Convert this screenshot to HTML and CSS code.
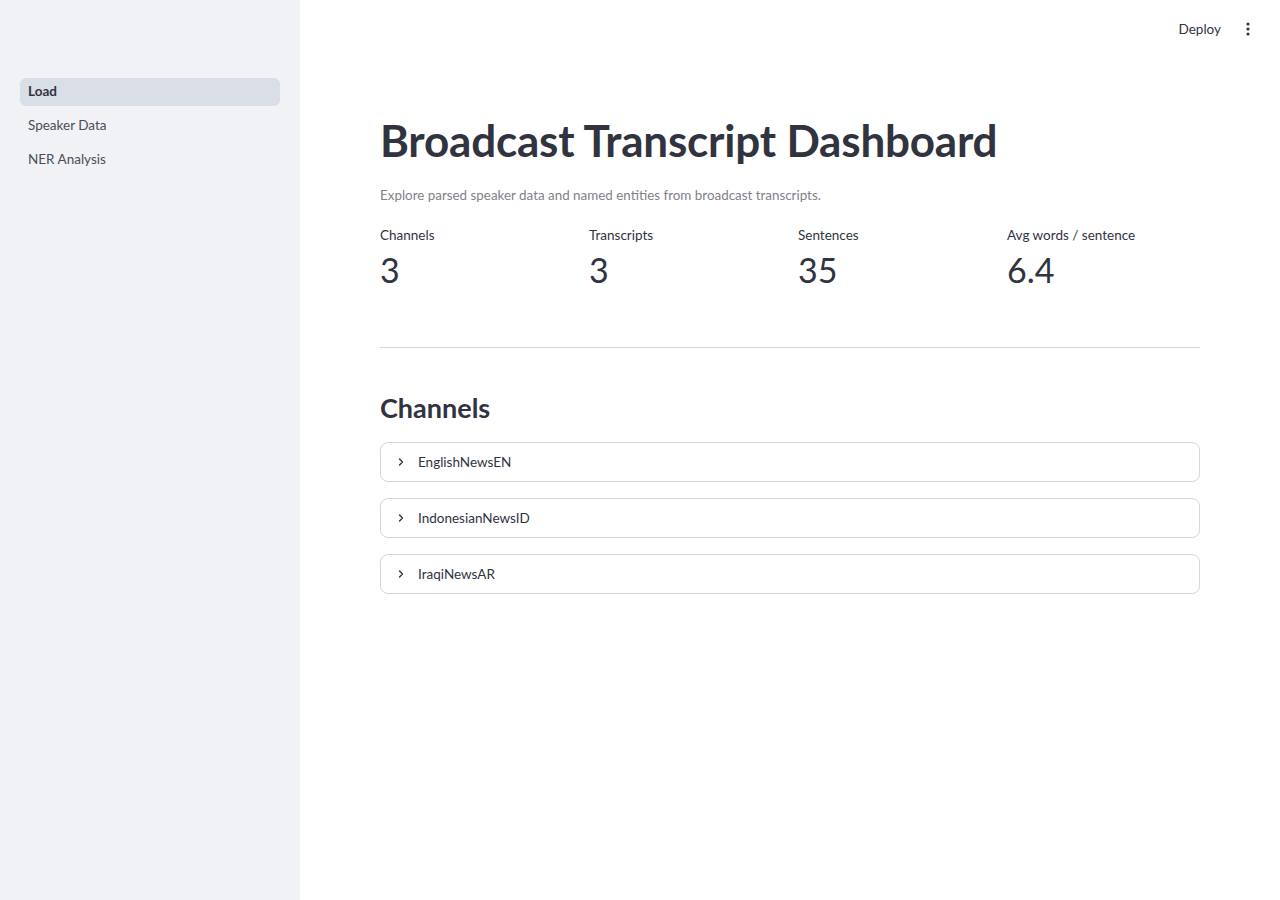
FILE: index.html
```html
<!DOCTYPE html>
<html lang="en">
<head>
    <meta charset="UTF-8">
    <meta name="viewport" content="width=device-width, initial-scale=1.0">
    <title>Broadcast Transcript Dashboard</title>
    <link rel="stylesheet" href="styles.css">
</head>
<body>
    <aside class="sidebar">
        <nav class="nav">
            <a class="nav-item active" href="#">Load</a>
            <a class="nav-item" href="#">Speaker Data</a>
            <a class="nav-item" href="#">NER Analysis</a>
        </nav>
    </aside>

    <div class="main">
        <header class="topbar">
            <span class="deploy">Deploy</span>
            <span class="menu">
                <svg width="16" height="16" viewBox="0 0 16 16">
                    <circle cx="8" cy="3" r="1.6" fill="#31333f"/>
                    <circle cx="8" cy="8" r="1.6" fill="#31333f"/>
                    <circle cx="8" cy="13" r="1.6" fill="#31333f"/>
                </svg>
            </span>
        </header>

        <section class="content">
            <h1 class="title">Broadcast Transcript Dashboard</h1>
            <p class="caption">Explore parsed speaker data and named entities from broadcast transcripts.</p>

            <div class="metrics">
                <div class="metric">
                    <div class="metric-label">Channels</div>
                    <div class="metric-value">3</div>
                </div>
                <div class="metric">
                    <div class="metric-label">Transcripts</div>
                    <div class="metric-value">3</div>
                </div>
                <div class="metric">
                    <div class="metric-label">Sentences</div>
                    <div class="metric-value">35</div>
                </div>
                <div class="metric">
                    <div class="metric-label">Avg words / sentence</div>
                    <div class="metric-value">6.4</div>
                </div>
            </div>

            <hr class="divider">

            <h2 class="subheader">Channels</h2>

            <div class="expanders">
                <div class="expander">
                    <svg class="chevron" width="12" height="12" viewBox="0 0 12 12"><path d="M4.5 3 L7.5 6 L4.5 9" fill="none" stroke="#31333f" stroke-width="1.4" stroke-linecap="round" stroke-linejoin="round"/></svg>
                    <span>EnglishNewsEN</span>
                </div>
                <div class="expander">
                    <svg class="chevron" width="12" height="12" viewBox="0 0 12 12"><path d="M4.5 3 L7.5 6 L4.5 9" fill="none" stroke="#31333f" stroke-width="1.4" stroke-linecap="round" stroke-linejoin="round"/></svg>
                    <span>IndonesianNewsID</span>
                </div>
                <div class="expander">
                    <svg class="chevron" width="12" height="12" viewBox="0 0 12 12"><path d="M4.5 3 L7.5 6 L4.5 9" fill="none" stroke="#31333f" stroke-width="1.4" stroke-linecap="round" stroke-linejoin="round"/></svg>
                    <span>IraqiNewsAR</span>
                </div>
            </div>
        </section>
    </div>
</body>
</html>
```

FILE: styles.css
```css
:root {
    --text: #31333f;
    --muted: #808289;
    --sidebar-bg: #f0f2f6;
    --active-bg: #dadee7;
    --border: #d6d6d9;
}

* {
    box-sizing: border-box;
    margin: 0;
    padding: 0;
}

body {
    font-family: Lato, 'Noto Sans', sans-serif;
    color: var(--text);
    background: #ffffff;
    display: flex;
    height: 100vh;
    overflow: hidden;
}

.sidebar {
    width: 300px;
    flex-shrink: 0;
    background: var(--sidebar-bg);
    padding: 78px 20px 0;
}

.nav {
    display: flex;
    flex-direction: column;
    gap: 6px;
}

.nav-item {
    display: block;
    height: 28px;
    line-height: 26px;
    padding: 0 8px;
    border-radius: 6px;
    font-size: 13.5px;
    color: #4b4d57;
    text-decoration: none;
}

.nav-item.active {
    background: var(--active-bg);
    color: var(--text);
    font-weight: 700;
}

.main {
    flex: 1;
    display: flex;
    flex-direction: column;
}

.topbar {
    height: 60px;
    display: flex;
    align-items: center;
    justify-content: flex-end;
    gap: 19px;
    padding: 0 24px 2px 0;
}

.deploy {
    font-size: 13.5px;
    color: var(--text);
}

.menu {
    display: flex;
}

.content {
    padding: 52px 80px 0;
}

.title {
    font-size: 44px;
    font-weight: 700;
    line-height: 1.2;
    letter-spacing: -0.2px;
    padding: 2px 0 18px;
}

.caption {
    font-size: 13.4px;
    color: var(--muted);
    line-height: 1.5;
}

.metrics {
    display: grid;
    grid-template-columns: repeat(4, 1fr);
    gap: 16px;
    margin-top: 20px;
}

.metric-label {
    font-size: 13.5px;
    line-height: 20px;
}

.metric-value {
    font-size: 34px;
    line-height: 50px;
}

.divider {
    border: none;
    border-top: 1px solid var(--border);
    margin: 52px 0 0;
}

.subheader {
    font-size: 27px;
    font-weight: 700;
    line-height: 1.2;
    margin: 44px 0 18px;
}

.expanders {
    display: flex;
    flex-direction: column;
    gap: 16px;
}

.expander {
    height: 40px;
    border: 1px solid var(--border);
    border-radius: 8px;
    display: flex;
    align-items: center;
    gap: 11px;
    padding: 0 14px;
    font-size: 13.5px;
}
```
